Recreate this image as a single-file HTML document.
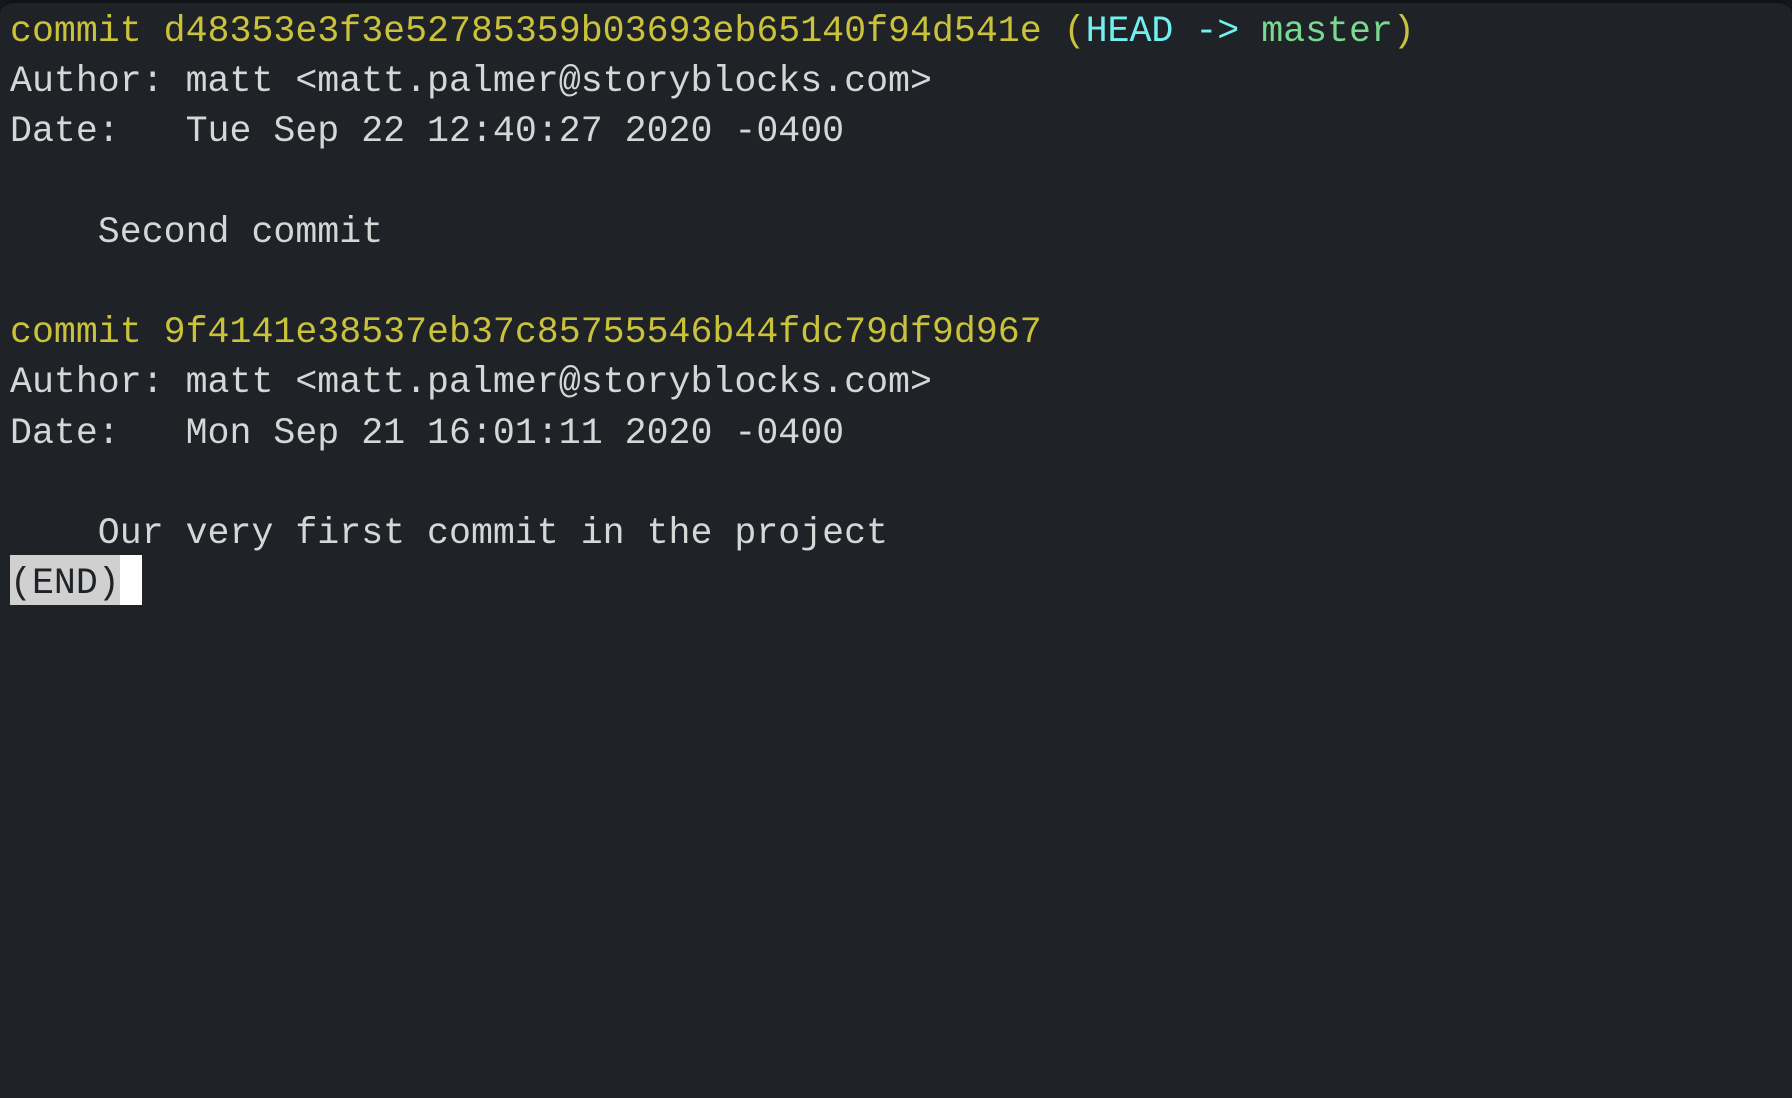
<!DOCTYPE html>
<html><head><meta charset="utf-8"><style>
html,body{margin:0;padding:0;background:#15171b;}
.win{position:absolute;left:0;top:0;width:1792px;height:1098px;background:#1f2227;border-radius:14px 14px 0 0;border-top:3px solid #111316;box-sizing:border-box;overflow:hidden;}
pre{margin:0;position:absolute;left:10px;top:4px;font-family:"Liberation Mono",monospace;font-size:36.6px;line-height:50.2px;color:#d6d6d6;}
.y{color:#c9c23a}.c{color:#72f0f0}.g{color:#79d98f}
.end{display:inline-block;height:50px;vertical-align:top;position:relative;top:-4px;background:#d0d0d0;color:#1f2227}
.end span{position:relative;top:4px}
.cur{display:inline-block;width:22px;height:50px;background:#fff;vertical-align:top;position:relative;top:-4px}
</style></head><body><div class="win"><pre><span class="y">commit d48353e3f3e52785359b03693eb65140f94d541e (<span class="c">HEAD -&gt; </span><span class="g">master</span>)</span>
Author: matt &lt;matt.palmer@storyblocks.com&gt;
Date:   Tue Sep 22 12:40:27 2020 -0400

    Second commit

<span class="y">commit 9f4141e38537eb37c85755546b44fdc79df9d967</span>
Author: matt &lt;matt.palmer@storyblocks.com&gt;
Date:   Mon Sep 21 16:01:11 2020 -0400

    Our very first commit in the project
<span class="end"><span>(END)</span></span><span class="cur"></span></pre></div></body></html>
